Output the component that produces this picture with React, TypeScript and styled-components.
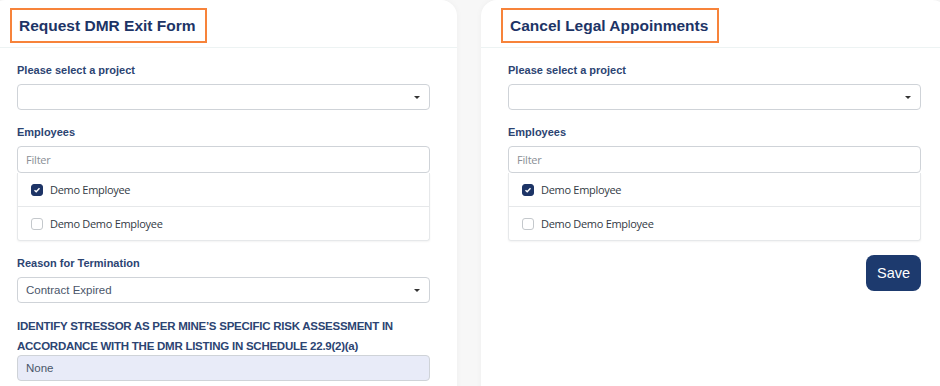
import React from 'react';
import styled, { createGlobalStyle } from 'styled-components';

interface CheckProps {
  checked?: boolean;
}

interface FieldProps {
  filled?: boolean;
}

const GlobalStyle = createGlobalStyle`
  html, body {
    margin: 0;
    padding: 0;
    background: #f7f7f7;
    overflow: hidden;
  }
  body {
    font-family: 'Liberation Sans', Arial, sans-serif;
  }
`;

const StyledPage = styled.div`
  width: 940px;
  height: 386px;
  overflow: hidden;
`;

const StyledColumns = styled.div`
  display: grid;
  grid-template-columns: 467px 467px;
  column-gap: 24px;
  margin-left: -10px;
`;

const StyledCard = styled.div`
  background: #ffffff;
  border-radius: 16px 16px 0 0;
  height: 420px;
  box-shadow: 0 0 6px rgba(0, 0, 0, 0.04);
`;

const StyledHeader = styled.div`
  height: 48px;
  box-sizing: border-box;
  padding: 8px 0 0 20px;
  border-bottom: 1px solid #edf3f3;
`;

const StyledTitle = styled.h2`
  display: inline-block;
  margin: 0;
  height: 35px;
  box-sizing: border-box;
  padding: 0 9px 0 7px;
  border: 2px solid #f7833a;
  font-size: 15.5px;
  line-height: 31px;
  font-weight: 700;
  color: #1d3466;
`;

const StyledBody = styled.div`
  display: flex;
  flex-direction: column;
  padding: 12px 27px 0 27px;
`;

const StyledLabel = styled.div`
  font-size: 11px;
  font-weight: 700;
  line-height: 20px;
  color: #2c4472;
  margin-bottom: 4px;
`;

const StyledLongLabel = styled(StyledLabel)`
  font-size: 11.5px;
  letter-spacing: -0.25px;
  margin: 1px 0 -1px 0;
`;

const StyledGroup = styled.div`
  margin-bottom: 12px;
`;

const StyledSelect = styled.div<FieldProps>`
  display: flex;
  align-items: center;
  justify-content: space-between;
  height: 26px;
  box-sizing: border-box;
  padding: 0 9px 0 8px;
  border: 1px solid #cfd3d8;
  border-radius: 4px;
  background: ${({ filled }) => (filled ? '#e8ebf8' : '#ffffff')};
  font-size: 11.5px;
  color: #4a566a;
`;

const StyledCaret = styled.span`
  width: 0;
  height: 0;
  border-left: 3px solid transparent;
  border-right: 3px solid transparent;
  border-top: 3px solid #333;
`;

const StyledFilter = styled.div`
  height: 27px;
  box-sizing: border-box;
  padding: 0 8px;
  display: flex;
  align-items: center;
  border: 1px solid #cfd3d8;
  border-radius: 4px;
  font-family: 'Open Sans', sans-serif;
  font-size: 11px;
  letter-spacing: -0.2px;
  color: #8a8f96;
`;

const StyledList = styled.div`
  border: 1px solid #e6e8ea;
  border-top: none;
  border-radius: 0 0 3px 3px;
  box-shadow: 0 1px 2px rgba(0, 0, 0, 0.05);
`;

const StyledRow = styled.div`
  display: flex;
  align-items: center;
  gap: 7px;
  height: 33px;
  padding-left: 13px;
  font-family: 'Open Sans', sans-serif;
  font-size: 11px;
  letter-spacing: -0.3px;
  color: #333a44;
  & + & {
    border-top: 1px solid #e6e8ea;
  }
`;

const StyledCheck = styled.span<CheckProps>`
  width: 12px;
  height: 12px;
  box-sizing: border-box;
  border-radius: 3px;
  display: flex;
  align-items: center;
  justify-content: center;
  background: ${({ checked }) => (checked ? '#1d3466' : '#ffffff')};
  border: 1px solid ${({ checked }) => (checked ? '#1d3466' : '#c4c8cc')};
`;

const StyledActions = styled.div`
  display: flex;
  justify-content: flex-end;
  margin-top: 2px;
`;

const StyledButton = styled.button`
  width: 55px;
  height: 36px;
  border: none;
  border-radius: 8px;
  background: #1d3a6e;
  color: #ffffff;
  font-family: 'Liberation Sans', Arial, sans-serif;
  font-size: 14.5px;
`;

const Check = ({ checked }: CheckProps): JSX.Element => (
  <StyledCheck checked={checked}>
    {checked && (
      <svg width="8" height="8" viewBox="0 0 8 8">
        <path d="M1.5 4.2 L3.2 5.8 L6.5 2.2" fill="none" stroke="#fff" strokeWidth="1.4" />
      </svg>
    )}
  </StyledCheck>
);

const EmployeePicker = (): JSX.Element => (
  <StyledGroup>
    <StyledLabel>Employees</StyledLabel>
    <StyledFilter>Filter</StyledFilter>
    <StyledList>
      <StyledRow>
        <Check checked />
        Demo Employee
      </StyledRow>
      <StyledRow>
        <Check />
        Demo Demo Employee
      </StyledRow>
    </StyledList>
  </StyledGroup>
);

const ProjectSelect = (): JSX.Element => (
  <StyledGroup>
    <StyledLabel>Please select a project</StyledLabel>
    <StyledSelect>
      <span />
      <StyledCaret />
    </StyledSelect>
  </StyledGroup>
);

export default function App(): JSX.Element {
  return (
    <StyledPage>
      <GlobalStyle />
      <StyledColumns>
        <StyledCard>
          <StyledHeader>
            <StyledTitle>Request DMR Exit Form</StyledTitle>
          </StyledHeader>
          <StyledBody>
            <ProjectSelect />
            <EmployeePicker />
            <StyledGroup>
              <StyledLabel>Reason for Termination</StyledLabel>
              <StyledSelect>
                <span>Contract Expired</span>
                <StyledCaret />
              </StyledSelect>
            </StyledGroup>
            <StyledLongLabel>
              IDENTIFY STRESSOR AS PER MINE’S SPECIFIC RISK ASSESSMENT IN ACCORDANCE WITH THE DMR LISTING IN SCHEDULE 22.9(2)(a)
            </StyledLongLabel>
            <StyledSelect filled>None</StyledSelect>
          </StyledBody>
        </StyledCard>
        <StyledCard>
          <StyledHeader>
            <StyledTitle>Cancel Legal Appoinments</StyledTitle>
          </StyledHeader>
          <StyledBody>
            <ProjectSelect />
            <EmployeePicker />
            <StyledActions>
              <StyledButton>Save</StyledButton>
            </StyledActions>
          </StyledBody>
        </StyledCard>
      </StyledColumns>
    </StyledPage>
  );
}
